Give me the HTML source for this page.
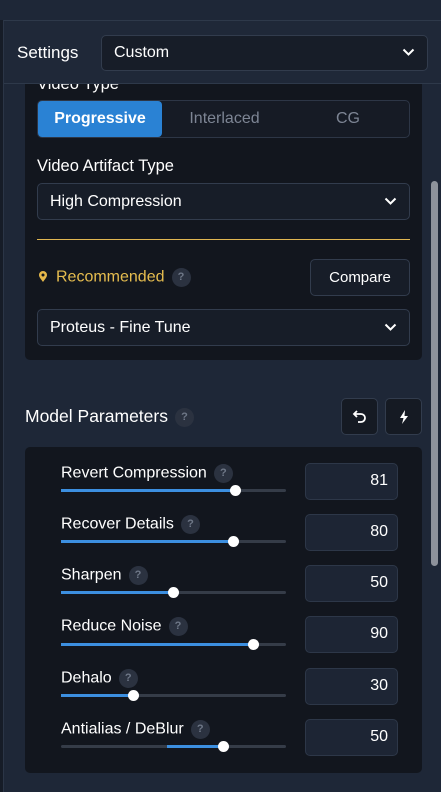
<!DOCTYPE html>
<html><head><meta charset="utf-8"><style>
*{box-sizing:border-box;margin:0;padding:0}
body{width:441px;height:792px;overflow:hidden;background:#1e2737;font-family:"Liberation Sans",sans-serif;color:#e8ebf0;position:relative}
.abs{position:absolute;white-space:nowrap}
.lstrip{left:0;top:20px;width:4px;height:772px;background:#161c27;border-right:1px solid #2b3546}
.hdr{left:4px;top:20px;width:437px;height:64px;border-top:1px solid #2e394a;border-bottom:1px solid #2e394a;background:#1f2838}
.sel{border:1px solid #323c4d;border-radius:5px;background:#171d28;font-size:16px;color:#fff;padding-left:12px;display:flex;align-items:center}
.chev{position:absolute;right:12px;top:50%;margin-top:-5px}
.card{background:#12161e;border-radius:5px}
.q{display:inline-block;width:19px;height:19px;border-radius:50%;background:#2b3240;color:#6f7888;font-size:11px;text-align:center;line-height:19px;vertical-align:middle;margin-left:7px;font-weight:bold}
.btn{border:1px solid #323c4d;border-radius:5px;background:#171d28;display:flex;align-items:center;justify-content:center;font-size:15px;color:#fff}
.lbl{font-size:16px;color:#fff}
.track{height:3px;background:#353c48;border-radius:2px}
.fill{height:3px;background:#3c8fe0;position:absolute;top:0}
.knob{width:11px;height:11px;border-radius:50%;background:#fff;position:absolute;top:-4px}
.inp{border:1px solid #2d3748;border-radius:5px;background:#1d2534;font-size:16px;color:#fff;text-align:right;padding-right:9px;line-height:34px}
</style></head><body>
<div class="abs" style="left:0;top:0;width:441px;height:20px;background:#1e2737"></div>
<div class="abs lstrip"></div>
<div class="abs hdr"></div>
<div class="abs lbl" style="left:17px;top:43px;font-size:17px">Settings</div>
<div class="abs sel" style="left:101px;top:35px;width:327px;height:36px;">Custom<svg class="chev" width="13" height="9" viewBox="0 0 13 9"><path d="M1.5 1.5l5 5 5-5" stroke="#fff" stroke-width="2" fill="none"/></svg></div>

<div class="abs card" style="left:25px;top:84px;width:397px;height:276px;border-radius:0 0 5px 5px;overflow:hidden">
 <div class="abs lbl" style="left:12px;top:-9px;font-size:16.5px">Video Type</div>
</div>
<div class="abs" style="left:37px;top:100px;width:373px;height:38px;border:1px solid #2d3646;border-radius:5px;background:#161b25;display:flex;font-size:16px">
 <div style="width:124px;background:#2a82d4;border-radius:4px;color:#fff;display:flex;align-items:center;justify-content:center;font-weight:bold">Progressive</div>
 <div style="width:125px;color:#7d8594;display:flex;align-items:center;justify-content:center">Interlaced</div>
 <div style="flex:1;color:#7d8594;display:flex;align-items:center;justify-content:center">CG</div>
</div>
<div class="abs lbl" style="left:37px;top:157px;font-size:16.5px">Video Artifact Type</div>
<div class="abs sel" style="left:37px;top:183px;width:373px;height:37px">High Compression<svg class="chev" width="13" height="9" viewBox="0 0 13 9"><path d="M1.5 1.5l5 5 5-5" stroke="#fff" stroke-width="2" fill="none"/></svg></div>
<div class="abs" style="left:37px;top:239px;width:373px;height:1px;background:#e0b652"></div>
<svg class="abs" style="left:38px;top:270px" width="10" height="14" viewBox="0 0 10 14"><path d="M5 1a4 4 0 0 1 4 4c0 2.5-2.5 4.5-4 7-1.5-2.5-4-4.5-4-7a4 4 0 0 1 4-4z" fill="#e6b84a"/><circle cx="5" cy="5" r="1.5" fill="#12161e"/></svg>
<div class="abs" style="left:56px;top:268px;font-size:16px;color:#e6bd4f">Recommended<span class="q">?</span></div>
<div class="abs btn" style="left:310px;top:259px;width:100px;height:37px">Compare</div>
<div class="abs sel" style="left:37px;top:309px;width:373px;height:37px">Proteus - Fine Tune<svg class="chev" width="13" height="9" viewBox="0 0 13 9"><path d="M1.5 1.5l5 5 5-5" stroke="#fff" stroke-width="2" fill="none"/></svg></div>

<div class="abs lbl" style="left:25px;top:406px;font-size:17.5px">Model Parameters<span class="q">?</span></div>
<div class="abs btn" style="left:341px;top:398px;width:37px;height:37px;background:#151a23"><svg width="16" height="14" viewBox="0 0 16 14"><path d="M5 1L2 4l3 3M2 4h7a4 4 0 0 1 0 8H6" stroke="#fff" stroke-width="1.8" fill="none"/></svg></div>
<div class="abs btn" style="left:385px;top:398px;width:37px;height:37px;background:#151a23"><svg width="10" height="14" viewBox="0 0 10 14"><path d="M6 0L1 8h3.5L3 14l6-8H5.5z" fill="#fff"/></svg></div>

<div class="abs card" style="left:25px;top:447px;width:397px;height:326px"></div>

<div class="abs lbl" style="left:61px;top:464px">Revert Compression<span class="q">?</span></div>
<div class="abs track" style="left:61px;top:489px;width:225px"><div class="fill" style="left:0;width:174px"></div><div class="knob" style="left:169px"></div></div>
<div class="abs inp" style="left:305px;top:463px;width:93px;height:37px">81</div>

<div class="abs lbl" style="left:61px;top:515px">Recover Details<span class="q">?</span></div>
<div class="abs track" style="left:61px;top:540px;width:225px"><div class="fill" style="left:0;width:172px"></div><div class="knob" style="left:167px"></div></div>
<div class="abs inp" style="left:305px;top:514px;width:93px;height:37px">80</div>

<div class="abs lbl" style="left:61px;top:566px">Sharpen<span class="q">?</span></div>
<div class="abs track" style="left:61px;top:591px;width:225px"><div class="fill" style="left:0;width:112px"></div><div class="knob" style="left:107px"></div></div>
<div class="abs inp" style="left:305px;top:565px;width:93px;height:37px">50</div>

<div class="abs lbl" style="left:61px;top:617px">Reduce Noise<span class="q">?</span></div>
<div class="abs track" style="left:61px;top:643px;width:225px"><div class="fill" style="left:0;width:192px"></div><div class="knob" style="left:187px"></div></div>
<div class="abs inp" style="left:305px;top:616px;width:93px;height:37px">90</div>

<div class="abs lbl" style="left:61px;top:669px">Dehalo<span class="q">?</span></div>
<div class="abs track" style="left:61px;top:694px;width:225px"><div class="fill" style="left:0;width:72px"></div><div class="knob" style="left:67px"></div></div>
<div class="abs inp" style="left:305px;top:668px;width:93px;height:37px">30</div>

<div class="abs lbl" style="left:61px;top:720px">Antialias / DeBlur<span class="q">?</span></div>
<div class="abs track" style="left:61px;top:745px;width:225px"><div class="fill" style="left:106px;width:56px"></div><div class="knob" style="left:157px"></div></div>
<div class="abs inp" style="left:305px;top:719px;width:93px;height:37px">50</div>

<div class="abs" style="left:431px;top:181px;width:7px;height:385px;border-radius:4px;background:#8d929b"></div>
</body></html>
